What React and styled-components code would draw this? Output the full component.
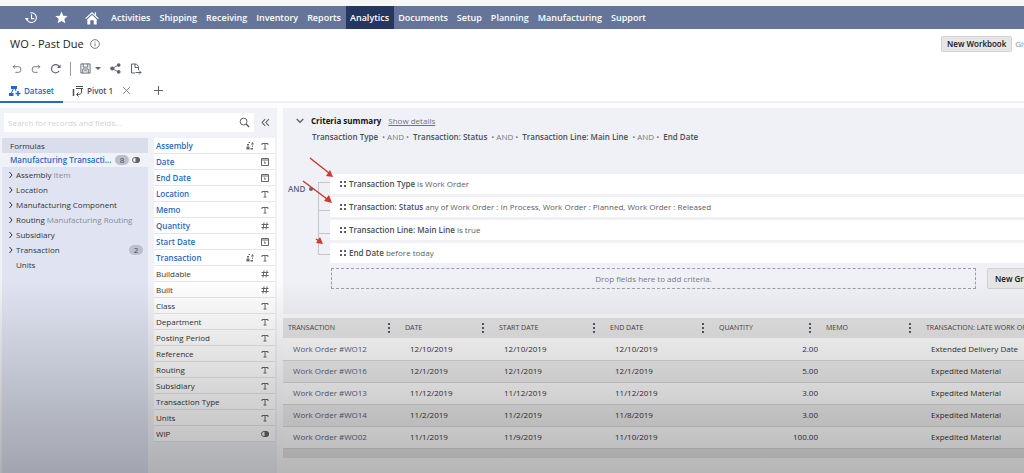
import React from "react";
import styled, { createGlobalStyle } from "styled-components";

const navItems = [
  "Activities",
  "Shipping",
  "Receiving",
  "Inventory",
  "Reports",
  "Analytics",
  "Documents",
  "Setup",
  "Planning",
  "Manufacturing",
  "Support"
];

const records = [
  { name: "Assembly", hint: "Item" },
  { name: "Location" },
  { name: "Manufacturing Component" },
  { name: "Routing", hint: "Manufacturing Routing" },
  { name: "Subsidiary" },
  { name: "Transaction", count: 2 },
  { name: "Units", leaf: true }
];

const fields = [
  { name: "Assembly", type: "text", used: true, join: true },
  { name: "Date", type: "date", used: true },
  { name: "End Date", type: "date", used: true },
  { name: "Location", type: "text", used: true },
  { name: "Memo", type: "text", used: true },
  { name: "Quantity", type: "number", used: true },
  { name: "Start Date", type: "date", used: true },
  { name: "Transaction", type: "text", used: true, join: true },
  { name: "Buildable", type: "number" },
  { name: "Built", type: "number" },
  { name: "Class", type: "text" },
  { name: "Department", type: "text" },
  { name: "Posting Period", type: "text" },
  { name: "Reference", type: "text" },
  { name: "Routing", type: "text" },
  { name: "Subsidiary", type: "text" },
  { name: "Transaction Type", type: "text" },
  { name: "Units", type: "text" },
  { name: "WIP", type: "bool" }
];

const criteria = [
  { field: "Transaction Type", rule: "is Work Order" },
  {
    field: "Transaction: Status",
    rule: "any of Work Order : In Process, Work Order : Planned, Work Order : Released"
  },
  { field: "Transaction Line: Main Line", rule: "is true" },
  { field: "End Date", rule: "before today" }
];

const columns = [
  { title: "TRANSACTION", width: 117 },
  { title: "DATE", width: 94 },
  { title: "START DATE", width: 111 },
  { title: "END DATE", width: 109 },
  { title: "QUANTITY", width: 107 },
  { title: "MEMO", width: 100 },
  { title: "TRANSACTION: LATE WORK ORDER" }
];

const orders = [
  ["Work Order #WO12", "12/10/2019", "12/10/2019", "12/10/2019", "2.00", "Extended Delivery Date"],
  ["Work Order #WO16", "12/1/2019", "12/1/2019", "12/1/2019", "5.00", "Expedited Material"],
  ["Work Order #WO13", "11/12/2019", "11/12/2019", "11/12/2019", "3.00", "Expedited Material"],
  ["Work Order #WO14", "11/2/2019", "11/2/2019", "11/8/2019", "3.00", "Expedited Material"],
  ["Work Order #WO02", "11/1/2019", "11/9/2019", "11/10/2019", "100.00", "Expedited Material"]
];

const Icon = ({ size = 12, box = 24, width = 2, children }) =>
  <svg
    width={size}
    height={size}
    viewBox={`0 0 ${box} ${box}`}
    fill="none"
    stroke="currentColor"
    strokeWidth={width}
    aria-hidden="true"
  >
    {children}
  </svg>;

const HistoryIcon = () =>
  <Icon size={13}>
    <path d="M10 3.500A9 9 0 1 1 3 13" />
    <path d="M0 13h7l-4 5z" fill="currentColor" stroke="none" />
    <path d="M12 6v8h5" />
  </Icon>;

const StarIcon = () =>
  <Icon size={13}>
    <path
      d="M12 1l3.200 7.600 8.200.7-6.200 5.400 1.900 8L12 18.400 4.900 22.700l1.900-8L.6 9.300l8.200-.7z"
      fill="currentColor"
      stroke="none"
    />
  </Icon>;

const HomeIcon = () =>
  <Icon size={14}>
    <path d="M1 13L12 3l11 10M18 7V2" />
    <path
      d="M4 14l8-7 8 7v9h-5v-7H9v7H4z"
      fill="currentColor"
      stroke="none"
    />
  </Icon>;

const InfoIcon = () =>
  <Icon size={10}>
    <circle cx="12" cy="12" r="10.500" />
    <path d="M12 10.500v7M12 6v2.500" />
  </Icon>;

const UndoIcon = () =>
  <Icon size={10}>
    <path d="M7 2L3 6.500 7 11M3 6.500h13a5 5 0 0 1 5 5V15a5 5 0 0 1-5 5H8" />
  </Icon>;

const RedoIcon = () =>
  <Icon size={10}>
    <path d="M17 2l4 4.500-4 4.500M21 6.500H8a5 5 0 0 0-5 5V15a5 5 0 0 0 5 5h8" />
  </Icon>;

const ReloadIcon = () =>
  <Icon size={11} width={2.5}>
    <path d="M20 17A9 9 0 1 1 20 8" />
    <path d="M23 3v8h-8z" fill="currentColor" stroke="none" />
  </Icon>;

const SaveIcon = () =>
  <Icon size={11}>
    <path d="M2 2h20v20H2zM7 2v7h10V2M6 22v-9h12v9M9 17h6" />
  </Icon>;

const ShareIcon = () =>
  <Icon size={11}>
    <path d="M19 4L5 12l14 8" />
    <g fill="currentColor" stroke="none">
      <circle cx="5" cy="12" r="4.500" />
      <circle cx="19" cy="4.500" r="4" />
      <circle cx="19" cy="19.500" r="4" />
    </g>
  </Icon>;

const ExportIcon = () =>
  <Icon size={12}>
    <path d="M10 20H3V2h7c4 0 7 3 7 7v5M10 2v7h7M11 19h11M18 15l4 4-4 4" />
  </Icon>;

const DatasetIcon = () =>
  <Icon size={12}>
    <path d="M9 7L4 18M12 7l2 5" />
    <g fill="currentColor" stroke="none">
      <path d="M4 2h12v6H4zM0 16h9v6H0z" />
    </g>
    <path d="M18 12v10M13 17h10" strokeWidth={3} />
  </Icon>;

const PivotIcon = () =>
  <Icon size={12}>
    <path d="M3 8v14" strokeWidth={3} />
    <path d="M8 3h14M8 7h14" />
    <path d="M19 7v7c0 4-3 5-9 5M13 15l-4 4 4 4" />
  </Icon>;

const CloseIcon = () =>
  <Icon size={9}>
    <path d="M3 3l18 18M21 3L3 21" />
  </Icon>;

const PlusIcon = () =>
  <Icon size={9} box={9} width={1}>
    <path d="M4.500 0v9M0 4.500h9" />
  </Icon>;

const SearchIcon = () =>
  <Icon size={11}>
    <circle cx="10" cy="10" r="7.500" />
    <path d="M15.500 15.500L22 22" strokeWidth={3} />
  </Icon>;

const CollapseIcon = () =>
  <Icon size={9}>
    <path d="M11 3l-8 9 8 9M21 3l-8 9 8 9" strokeWidth={3} />
  </Icon>;

const ChevronRight = () =>
  <Icon size={6} box={12}>
    <path d="M3 0l5 6-5 6" />
  </Icon>;

const ChevronDown = () =>
  <Icon size={8} box={12}>
    <path d="M1 3l5 5 5-5" />
  </Icon>;

const ToggleIcon = () =>
  <Icon size={8} box={16}>
    <rect x="1" y="3" width="14" height="10" rx="5" />
    <path d="M8 3h2a5 5 0 0 1 0 10H8z" fill="currentColor" />
  </Icon>;

const TextIcon = () =>
  <Icon size={8} box={16}>
    <path d="M2 6V3h12v3M8 3v11M5 14h6" />
  </Icon>;

const NumberIcon = () =>
  <Icon size={8} box={16}>
    <path d="M6 1L4 15M12 1l-2 14M1 5h14M1 11h14" />
  </Icon>;

const DateIcon = () =>
  <Icon size={8} box={16}>
    <path d="M1 1h14v14H1zM1 4h14" />
    <path d="M6 8h2v4" />
  </Icon>;

const JoinIcon = () =>
  <Icon size={8} box={16}>
    <g fill="currentColor" stroke="none">
      <path d="M1 9h6v6H1zM9 12h5v3H9zM2 4h4v3H2z" />
      <path d="M10 5l3-5 3 5z" />
    </g>
    <path d="M8 1H5M13 7v3" />
  </Icon>;

const GripIcon = () =>
  <svg width="7" height="6" viewBox="0 0 7 6" fill="#5a5c64" aria-hidden="true">
    <path d="M1 0h2v2H1zM5 0h2v2H5zM1 4h2v2H1zM5 4h2v2H5z" />
  </svg>;

const typeIcons = {
  text: TextIcon,
  number: NumberIcon,
  date: DateIcon,
  bool: ToggleIcon
};

export default class App extends React.Component {
  state = { search: "" };

  render() {
    return (
      <Page>
        <GlobalStyle />
        <TopStrip />
        <Nav>
          <NavIcon href="#recent" aria-label="Recent"><HistoryIcon /></NavIcon>
          <NavIcon href="#shortcuts" aria-label="Shortcuts"><StarIcon /></NavIcon>
          <NavIcon href="#home" aria-label="Home"><HomeIcon /></NavIcon>
          {navItems.map(item =>
            <NavLink key={item} href={`#${item}`} $active={item === "Analytics"}>
              {item}
            </NavLink>
          )}
        </Nav>
        <TitleRow>
          <Title>WO - Past Due</Title>
          <InfoIcon />
          <Actions>
            <Button>New Workbook</Button>
            <Feedback href="#feedback">Give Feedback</Feedback>
          </Actions>
        </TitleRow>
        <Toolbar>
          <Tool aria-label="Undo"><UndoIcon /></Tool>
          <Tool aria-label="Redo"><RedoIcon /></Tool>
          <Tool aria-label="Refresh"><ReloadIcon /></Tool>
          <Separator />
          <Tool aria-label="Save"><SaveIcon /><Caret /></Tool>
          <Tool aria-label="Share"><ShareIcon /></Tool>
          <Tool aria-label="Export"><ExportIcon /></Tool>
        </Toolbar>
        <Tabs>
          <Tab $active><DatasetIcon />Dataset</Tab>
          <Tab><PivotIcon />Pivot 1</Tab>
          <Tool aria-label="Close Pivot 1"><CloseIcon /></Tool>
          <AddTab aria-label="Add tab"><PlusIcon /></AddTab>
        </Tabs>
        <Workspace>
          <Sidebar>
            <SearchRow>
              <SearchBox>
                <SearchInput
                  aria-label="Search for records and fields"
                  placeholder="Search for records and fields..."
                  value={this.state.search}
                  onChange={e => this.setState({ search: e.target.value })}
                />
                <SearchIcon />
              </SearchBox>
              <Tool aria-label="Collapse panel"><CollapseIcon /></Tool>
            </SearchRow>
            <Lists>
              <Records>
                <RecordHead>Formulas</RecordHead>
                <RecordHead $selected>
                  <RecordName>Manufacturing Transaction</RecordName>
                  <Count>8</Count>
                  <ToggleIcon />
                </RecordHead>
                {records.map(record =>
                  <Record key={record.name} $leaf={record.leaf}>
                    {!record.leaf && <ChevronRight />}
                    <span>
                      {record.name} {record.hint && <Hint>{record.hint}</Hint>}
                    </span>
                    {record.count && <Count $end>{record.count}</Count>}
                  </Record>
                )}
              </Records>
              <Fields>
                {fields.map(field => {
                  const TypeIcon = typeIcons[field.type];
                  return (
                    <Field key={field.name} $used={field.used}>
                      <FieldName>{field.name}</FieldName>
                      {field.join && <JoinIcon />}
                      <TypeIcon />
                    </Field>
                  );
                })}
              </Fields>
            </Lists>
          </Sidebar>
          <Main>
            <Criteria>
              <SummaryHead>
                <Tool aria-label="Toggle criteria summary"><ChevronDown /></Tool>
                <SummaryTitle>Criteria summary</SummaryTitle>
                <DetailsLink href="#details">Show details</DetailsLink>
              </SummaryHead>
              <SummaryLine>
                {criteria.map((item, i) =>
                  <React.Fragment key={item.field}>
                    {i > 0 && <Joiner>• AND •</Joiner>}
                    <b>{item.field}</b>
                  </React.Fragment>
                )}
              </SummaryLine>
              <Group>
                <Operator>AND <OperatorDot /></Operator>
                <Rail>
                  <Tick $height={28} />
                  <Tick $height={23} />
                </Rail>
                <Rules>
                  {criteria.map(item =>
                    <Rule key={item.field}>
                      <GripIcon />
                      <span><b>{item.field}</b> {item.rule}</span>
                    </Rule>
                  )}
                </Rules>
                <Arrows viewBox="0 0 40 100" aria-hidden="true">
                  <path d="M12 6L31 21M5 29L29 47M18 87l3 2" />
                  <g fill="#cf3a2c" stroke="none">
                    <path d="M35 25l-7-1 4-6z" />
                    <path d="M34 51l-8-2 5-6z" />
                    <path d="M25 92l-7-1 4-6z" />
                  </g>
                </Arrows>
              </Group>
              <DropRow>
                <DropZone>Drop fields here to add criteria.</DropZone>
                <NewGroup>
                  <Button $tall>New Group</Button>
                </NewGroup>
              </DropRow>
            </Criteria>
            <Results>
              <colgroup>
                {columns.map(col => <Col key={col.title} $width={col.width} />)}
              </colgroup>
              <thead>
                <tr>
                  {columns.map((col, i) =>
                    <Th key={col.title}>
                      <ThInner>
                        <span>{col.title}</span>
                        {i < columns.length - 1 && <Dots><i /><i /><i /></Dots>}
                      </ThInner>
                    </Th>
                  )}
                </tr>
              </thead>
              <tbody>
                {orders.map(([id, date, start, end, quantity, reason]) =>
                  <Row key={id}>
                    <Td><OrderLink href={`#${id.slice(-4)}`}>{id}</OrderLink></Td>
                    <Td>{date}</Td>
                    <Td>{start}</Td>
                    <Td>{end}</Td>
                    <Td $right>{quantity}</Td>
                    <Td />
                    <Td>{reason}</Td>
                  </Row>
                )}
              </tbody>
            </Results>
            <ScrollTrack />
          </Main>
        </Workspace>
      </Page>
    );
  }
}

const GlobalStyle = createGlobalStyle`
  * { box-sizing: border-box; }
  body {
    margin: 0;
    background: #fff;
    color: #333;
    font: 8px/12px "Open Sans", "Noto Sans", sans-serif;
  }
  button, input { font: inherit; color: inherit; }
  b { font-weight: 600; color: #4b4d55; }
  svg { flex: none; display: block; }
`;

const Page = styled.div`
  position: relative;
  display: flex;
  flex-direction: column;
  min-height: 100vh;
  overflow: hidden;

  /* fade towards the bottom of the screen */
  &::after {
    content: "";
    position: absolute;
    inset: 0;
    pointer-events: none;
    background: linear-gradient(transparent 59%, rgba(0, 0, 0, 0.28));
  }
`;

const TopStrip = styled.div`
  height: 6px;
  background: #f5f6f6;
`;

const Nav = styled.nav`
  display: flex;
  height: 23px;
  padding-left: 17px;
  background: #647599;
`;

const NavLink = styled.a`
  display: flex;
  align-items: center;
  padding: 0 5px 0 4px;
  color: #fff;
  font-size: 9px;
  font-weight: 600;
  text-decoration: none;
  background: ${props => (props.$active ? "#243760" : "transparent")};
`;

const NavIcon = styled(NavLink)`
  justify-content: center;
  width: 30px;
`;

const TitleRow = styled.header`
  display: flex;
  align-items: center;
  gap: 6px;
  height: 29px;
  padding-left: 10px;
  color: #666;
`;

const Title = styled.h1`
  margin: 0;
  color: #222;
  font-size: 11px;
  font-weight: 400;
`;

const Actions = styled.div`
  display: flex;
  align-items: center;
  gap: 3px;
  width: 83px;
  margin-left: auto;
  overflow: hidden;
  white-space: nowrap;
`;

const Button = styled.button`
  flex: none;
  height: ${props => (props.$tall ? 21 : 16)}px;
  padding: 0 ${props => (props.$tall ? 7 : 5)}px;
  border: 1px solid #d2d2d2;
  border-radius: 2px;
  background: #e6e6e6;
  color: #111;
  font-weight: 600;
  line-height: 12px;
`;

const Feedback = styled.a`
  color: #888;
  text-decoration: none;
`;

const Toolbar = styled.div`
  display: flex;
  align-items: center;
  gap: 9px;
  height: 21px;
  padding-left: 12px;
`;

const Tool = styled.button`
  display: flex;
  align-items: center;
  gap: 4px;
  padding: 0;
  border: 0;
  background: none;
  color: #5f6370;
`;

const Separator = styled.div`
  width: 1px;
  height: 14px;
  background: #999;
`;

const Caret = styled.span`
  border: 3px solid transparent;
  border-top-color: #5b6482;
  border-bottom: 0;
`;

const Tabs = styled.div`
  display: flex;
  height: 24px;
  border-bottom: 2px solid #eeeff3;
`;

const Tab = styled.button`
  display: flex;
  align-items: center;
  gap: 3px;
  height: 24px;
  padding: 2px 9px 0;
  border: 0;
  border-bottom: 2px solid ${props => (props.$active ? "#2468cc" : "transparent")};
  background: none;
  color: ${props => (props.$active ? "#2468cc" : "#4b4d55")};
  font-weight: 600;
`;

const AddTab = styled(Tool)`
  margin-left: 23px;
`;

const Workspace = styled.div`
  display: flex;
  flex: 1;
  gap: 6px;
  padding-top: 5px;
  background: #fcfcfd;
`;

const Sidebar = styled.aside`
  display: flex;
  flex: 0 0 277px;
  flex-direction: column;
  background: #f1f2f7;
`;

const SearchRow = styled.div`
  display: flex;
  gap: 7px;
  padding: 5px 4px 0;
`;

const SearchBox = styled.label`
  display: flex;
  align-items: center;
  width: 250px;
  height: 19px;
  padding: 0 4px;
  background: #fff;
  color: #555;
`;

const SearchInput = styled.input`
  flex: 1;
  padding: 0;
  border: 0;
  outline: 0;
  background: none;

  &::placeholder {
    color: #d0d2d8;
  }
`;

const Lists = styled.div`
  display: flex;
  flex: 1;
  gap: 6px;
  padding: 6px 2px 0;
`;

const Records = styled.div`
  display: flex;
  flex-direction: column;
  width: 146px;
  background: #e0e4f2;
`;

const RecordHead = styled.button`
  display: flex;
  align-items: center;
  gap: 3px;
  height: ${props => (props.$selected ? 14 : 15)}px;
  padding: 0 8px;
  border: 0;
  background: ${props => (props.$selected ? "#f0f2fa" : "#dadeec")};
  color: ${props => (props.$selected ? "#2b68bd" : "#333")};
  font-weight: ${props => (props.$selected ? 600 : 400)};

  svg {
    color: #666;
  }
`;

const RecordName = styled.span`
  width: 103px;
  overflow: hidden;
  text-align: left;
  text-overflow: ellipsis;
  white-space: nowrap;
`;

const Record = styled.button`
  display: flex;
  align-items: center;
  gap: 2px;
  height: 15px;
  padding: 0 5px 0 ${props => (props.$leaf ? 14 : 6)}px;
  border: 0;
  background: none;
  text-align: left;
`;

const Hint = styled.span`
  color: #858a9a;
`;

const Count = styled.span`
  width: 14px;
  margin-left: ${props => (props.$end ? "auto" : 0)};
  border-radius: 5px;
  background: #bcc0cc;
  color: #444a5c;
  font-weight: 400;
  line-height: 10px;
  text-align: center;
`;

const Fields = styled.ul`
  flex: 1;
  margin: 0;
  padding: 0;
  list-style: none;
`;

const Field = styled.li`
  display: flex;
  align-items: center;
  gap: 7px;
  height: 16px;
  padding: 0 6px 0 2px;
  border-bottom: 1px solid #e6e6e8;
  background: #fff;
  color: ${props => (props.$used ? "#2b68bd" : "#333")};
  font-weight: ${props => (props.$used ? 600 : 400)};

  svg {
    color: #666;
  }
`;

const FieldName = styled.span`
  flex: 1;
`;

const Main = styled.main`
  flex: 1;
  min-width: 0;
`;

const Criteria = styled.section`
  padding: 7px 0 25px;
  border-bottom: 4px solid #fafafa;
  background: #f0f1f6;
`;

const SummaryHead = styled.div`
  display: flex;
  align-items: center;
  gap: 7px;
  padding-left: 13px;
`;

const SummaryTitle = styled.h2`
  margin: 0;
  color: #111;
  font-size: 8px;
  font-weight: 700;
`;

const DetailsLink = styled.a`
  color: #6d7284;
`;

const SummaryLine = styled.div`
  display: flex;
  gap: 4px;
  margin: 4px 0 31px;
  padding-left: 29px;
`;

const Joiner = styled.span`
  color: #73798f;
`;

const Group = styled.div`
  position: relative;
  display: flex;
`;

const Operator = styled.div`
  display: flex;
  align-items: center;
  gap: 4px;
  width: 35px;
  height: 30px;
  padding-left: 5px;
  color: #5b6482;
  font-weight: 600;
`;

const OperatorDot = styled.span`
  width: 4px;
  height: 4px;
  border-radius: 2px;
  background: #5b6482;
`;

const Rail = styled.div`
  width: 12px;
  margin: 8px 0;
  border: 1px solid #c4c6cc;
  border-right: 0;
`;

const Tick = styled.div`
  height: ${props => props.$height}px;
  border-bottom: 1px solid #c4c6cc;
`;

const Rules = styled.div`
  display: flex;
  flex: 1;
  flex-direction: column;
  gap: 3px;
`;

const Rule = styled.div`
  display: flex;
  align-items: center;
  gap: 3px;
  height: 20px;
  padding-left: 9px;
  background: #fff;
  color: #5a5c64;
`;

const Arrows = styled.svg`
  position: absolute;
  top: -22px;
  left: 15px;
  width: 40px;
  height: 100px;
  fill: none;
  stroke: #cf3a2c;
  stroke-width: 1.5;
`;

const DropRow = styled.div`
  display: flex;
  gap: 11px;
  padding: 5px 0 0 48px;
`;

const DropZone = styled.div`
  flex: 1;
  height: 21px;
  border: 1px dashed #9a9eae;
  color: #73798f;
  line-height: 19px;
  text-align: center;
`;

const NewGroup = styled.div`
  width: 37px;
  overflow: hidden;
  white-space: nowrap;
`;

const Results = styled.table`
  width: 100%;
  border-collapse: collapse;
  table-layout: fixed;
`;

const Col = styled.col`
  width: ${props => (props.$width ? `${props.$width}px` : "auto")};
`;

const Th = styled.th`
  height: 20px;
  padding: 0 10px 0 5px;
  overflow: hidden;
  background: #e4e4e4;
  color: #444;
  font-size: 7px;
  font-weight: 400;
  text-align: left;
  white-space: nowrap;

  &:last-child {
    padding-right: 0;
  }
`;

const ThInner = styled.div`
  display: flex;
  align-items: center;
  justify-content: space-between;
`;

const Dots = styled.span`
  display: flex;
  flex-direction: column;
  gap: 2px;

  i {
    width: 2px;
    height: 2px;
    background: #555a6a;
  }
`;

const Row = styled.tr`
  background: #fdfdfd;

  &:nth-child(even) {
    background: #eee;
  }
`;

const Td = styled.td`
  height: 22px;
  padding: 0 ${props => (props.$right ? 3 : 0)}px 0 10px;
  border-bottom: 1px solid #d8d8d8;
  text-align: ${props => (props.$right ? "right" : "left")};
  white-space: nowrap;
`;

const OrderLink = styled.a`
  color: #555f80;
  text-decoration: none;
`;

const ScrollTrack = styled.div`
  height: 9px;
  background: #e6e3e3;
`;
